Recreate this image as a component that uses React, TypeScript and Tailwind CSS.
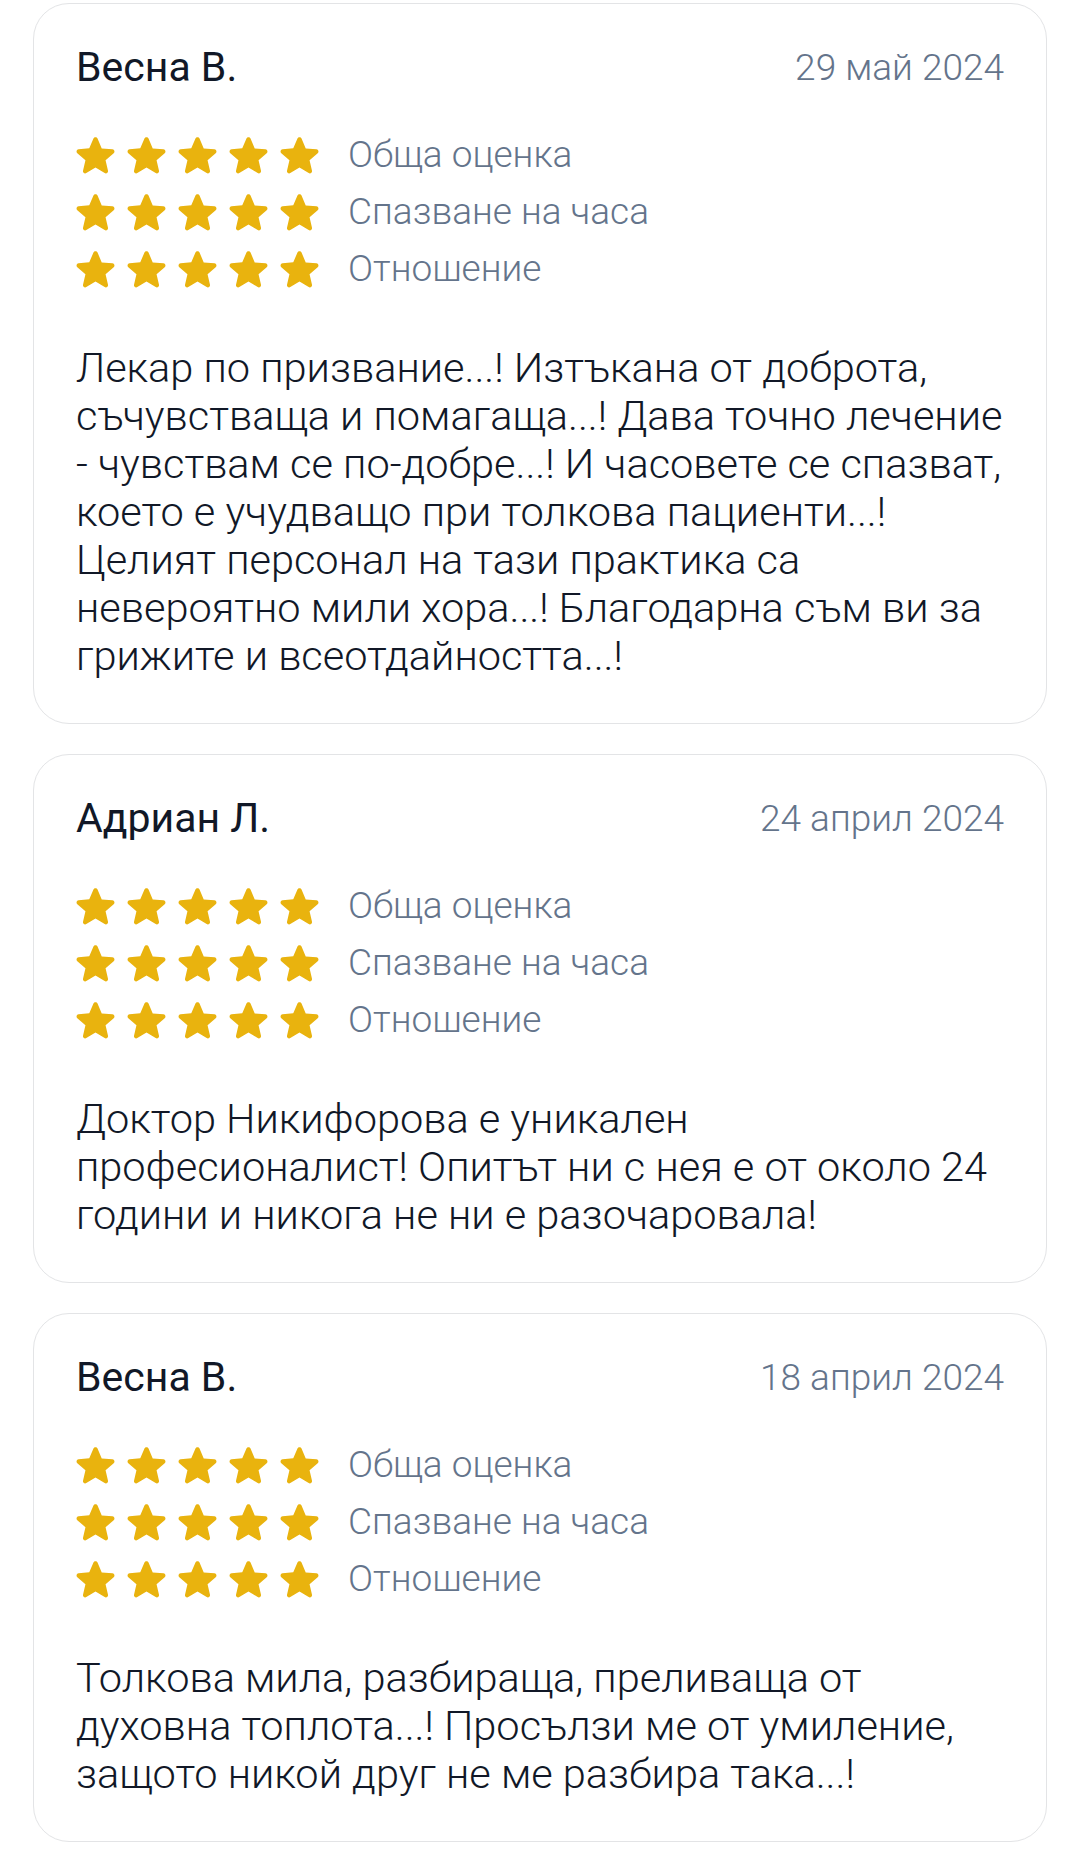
import React from "react";

const Star = () => (
  <svg width="39" height="39" viewBox="3.4 2.6 17.2 17.6" className="shrink-0">
    <path
      fill="#E9B30E"
      d="m12 17.27 4.15 2.51c.76.46 1.69-.22 1.49-1.08l-1.1-4.72 3.67-3.18c.67-.58.31-1.68-.57-1.75l-4.83-.41-1.89-4.46c-.34-.81-1.5-.81-1.84 0L9.19 8.63l-4.83.41c-.88.07-1.24 1.17-.57 1.75l3.67 3.18-1.1 4.72c-.2.86.73 1.54 1.49 1.08z"
    />
  </svg>
);

const light = { fontFamily: "'Roboto Light', Roboto, 'Noto Sans', sans-serif" };

const RatingRow = ({ label }: { label: string }) => (
  <div className="flex items-center h-[57px]">
    <div className="flex gap-[12px]">
      <Star />
      <Star />
      <Star />
      <Star />
      <Star />
    </div>
    <span className="ml-[29px] text-[37px] font-light text-[#64748b] leading-none" style={light}>
      {label}
    </span>
  </div>
);

type Review = { name: string; date: string; lines: string[] };

const reviews: Review[] = [
  {
    name: "Весна В.",
    date: "29 май 2024",
    lines: [
      "Лекар по призвание...! Изтъкана от доброта,",
      "съчувстваща и помагаща...! Дава точно лечение",
      "- чувствам се по-добре...! И часовете се спазват,",
      "което е учудващо при толкова пациенти...!",
      "Целият персонал на тази практика са",
      "невероятно мили хора...! Благодарна съм ви за",
      "грижите и всеотдайността...!",
    ],
  },
  {
    name: "Адриан Л.",
    date: "24 април 2024",
    lines: [
      "Доктор Никифорова е уникален",
      "професионалист! Опитът ни с нея е от около 24",
      "години и никога не ни е разочаровала!",
    ],
  },
  {
    name: "Весна В.",
    date: "18 април 2024",
    lines: [
      "Толкова мила, разбираща, преливаща от",
      "духовна топлота...! Просълзи ме от умиление,",
      "защото никой друг не ме разбира така...!",
    ],
  },
];

const Card = ({ r }: { r: Review }) => (
  <div className="rounded-[36px] border-[1.5px] border-[#e3e4e6] bg-white px-[42px] pt-[39px] pb-[43px]">
    <div className="flex items-center justify-between h-[48px]">
      <span className="text-[41px] text-[#111827] leading-none">{r.name}</span>
      <span className="text-[37px] font-light text-[#64748b] leading-none" style={light}>
        {r.date}
      </span>
    </div>
    <div className="mt-[35px] flex flex-col">
      <RatingRow label="Обща оценка" />
      <RatingRow label="Спазване на часа" />
      <RatingRow label="Отношение" />
    </div>
    <div className="mt-[47px] text-[41.5px] font-light text-[#111827] leading-[48px]" style={light}>
      {r.lines.map((l, i) => (
        <div key={i} className="whitespace-nowrap">
          {l}
        </div>
      ))}
    </div>
  </div>
);

export default function App() {
  return (
    <div
      className="w-[1080px] min-h-[1856px] bg-white px-[33px] pt-[3px] flex flex-col gap-[30px]"
      style={{ fontFamily: "Roboto, 'Noto Sans', sans-serif" }}
    >
      {reviews.map((r, i) => (
        <Card key={i} r={r} />
      ))}
    </div>
  );
}
